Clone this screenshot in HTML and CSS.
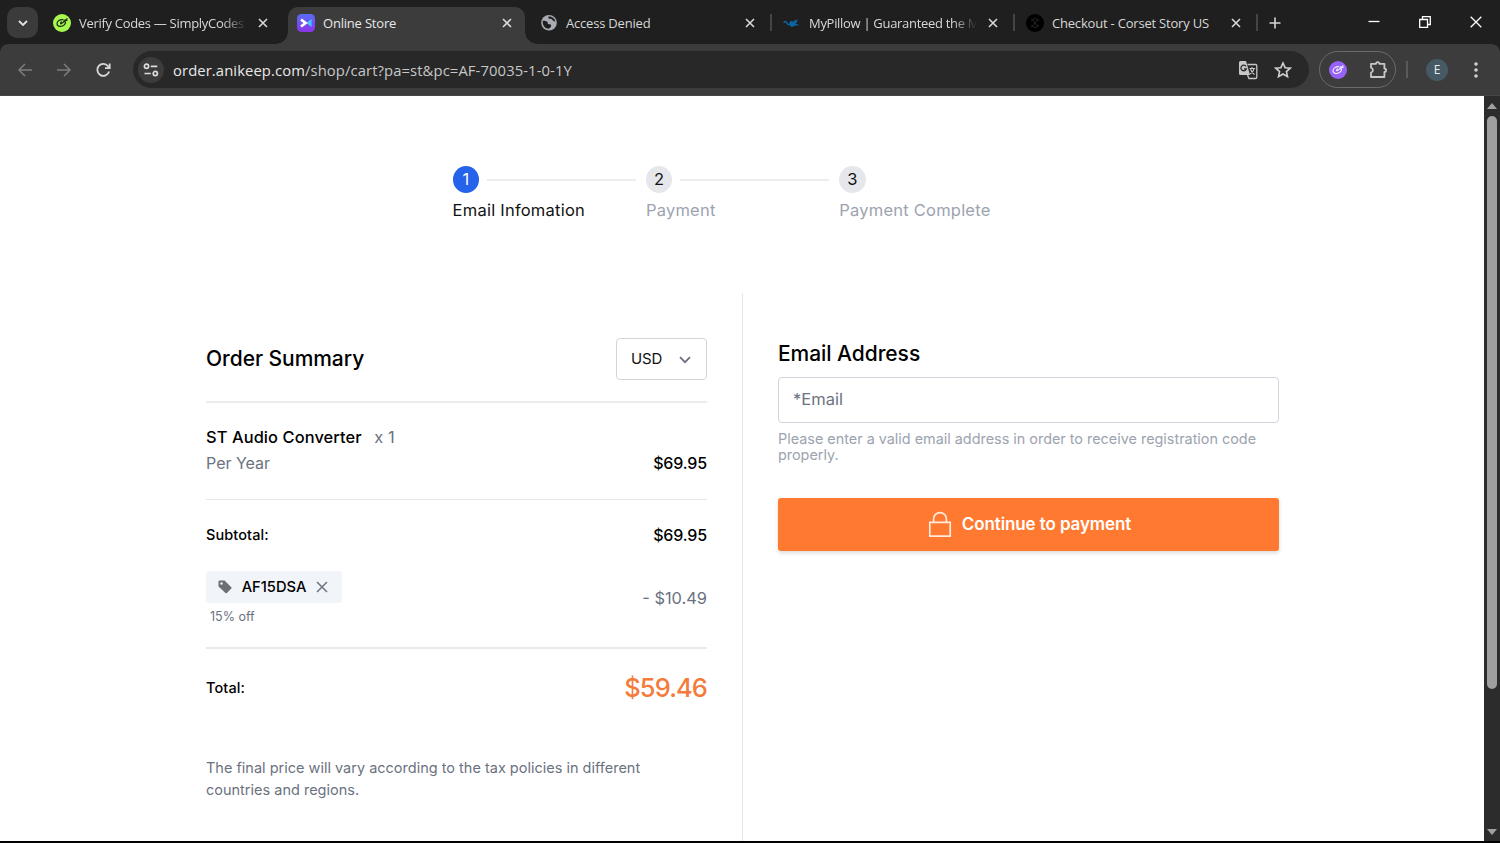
FILE: index.html
```
<!DOCTYPE html>
<html lang="en">
<head>
    <meta charset="UTF-8">
    <title>Online Store</title>
    <link rel="stylesheet" href="styles.css">
</head>
<body>
    <div class="tab-strip">
        <div class="tab-search">
            <svg width="10" height="6" viewBox="0 0 10 6"><path d="M1 1l4 4 4-4" fill="none" stroke="#e3e3e3" stroke-width="1.8"/></svg>
        </div>
        <div class="tab">
            <svg class="favicon" viewBox="0 0 18 18"><circle cx="9" cy="9" r="9" fill="#a6f750"/><path d="M10.500 5.800C7 5 3.800 7.300 4 10c.3 3 5 3.200 7.300.8 1.500-1.500 1.700-3 .5-3.200-1.300-.2-3 2.400-3.800 2.200-.8-.1-.3-1.600.8-2.200M10.500 7.500L14.500 4.500M11.500 5.800l3 1" fill="none" stroke="#1b2a12" stroke-width="1.200"/></svg>
            <span class="tab-title fade">Verify Codes — SimplyCodes</span>
            <svg class="close" viewBox="0 0 10 10"><path d="M1 1l8 8M9 1l-8 8"/></svg>
        </div>
        <div class="tab active">
            <svg class="favicon" viewBox="0 0 18 18">
                <defs><linearGradient id="store" x1="0" y1="0" x2="0" y2="1"><stop offset="0" stop-color="#5a6cf5"/><stop offset="1" stop-color="#8a35e8"/></linearGradient></defs>
                <rect width="18" height="18" rx="4.500" fill="url(#store)"/>
                <path d="M14.500 5v8L9.500 9z" fill="#43c8ff"/>
                <path d="M4 5.500L8.500 9 4 12.500" fill="none" stroke="#fff" stroke-width="2.800"/>
            </svg>
            <span class="tab-title">Online Store</span>
            <svg class="close" viewBox="0 0 10 10"><path d="M1 1l8 8M9 1l-8 8"/></svg>
        </div>
        <div class="tab">
            <svg class="favicon" viewBox="0 0 18 18"><circle cx="9" cy="8.700" r="7.800" fill="#a9adb3"/><path d="M2.700 6.700c2.500 0 5 .4 5 2.200 0 1.800 2 .8 3.200 1.800 1 1-.2 3.200-2.500 4-3.800-.2-6-3.500-5.700-8zM8.500 2.400c-.5 2 .5 2.600 2 2.400 1.600-.2 1.700 2 3.200 2.200 1 .1 1.600.6 1.700 1.200C15.300 4.700 12.500 2.200 8.500 2.400z" fill="#1f1f1f"/></svg>
            <span class="tab-title">Access Denied</span>
            <svg class="close" viewBox="0 0 10 10"><path d="M1 1l8 8M9 1l-8 8"/></svg>
        </div>
        <div class="tab line">
            <svg class="favicon" viewBox="0 0 18 18"><path d="M.7 9c.8-2 2.500-1.800 3.100-.2s1.600 2.300 3 1.200c1-.8 0-2 1.200-2.300" fill="none" stroke="#0b66a6" stroke-width="1.400"/><path d="M6 10.500L8.500 7l2 1 1.500-2.500 1 1.200L14.500 5l-.3 3-2 1.500 4.500 1.700-4.700.3-1.500 1-2.500.3z" fill="#0b66a6"/></svg>
            <span class="tab-title fade">MyPillow | Guaranteed the M</span>
            <svg class="close" viewBox="0 0 10 10"><path d="M1 1l8 8M9 1l-8 8"/></svg>
        </div>
        <div class="tab line">
            <svg class="favicon" viewBox="0 0 18 18"><circle cx="9" cy="9" r="9" fill="#000"/><path d="M5.500 4.500l7 9M12.500 4.500l-7 9M5 7l4-3 4 3M5 11l4 3 4-3" fill="none" stroke="#2c2c2c" stroke-width=".8"/></svg>
            <span class="tab-title">Checkout - Corset Story US</span>
            <svg class="close" viewBox="0 0 10 10"><path d="M1 1l8 8M9 1l-8 8"/></svg>
        </div>
        <div class="new-tab">
            <svg width="12" height="12" viewBox="0 0 12 12"><path d="M6 .5v11M.5 6h11" stroke="#d5d5d5" stroke-width="1.600"/></svg>
        </div>
        <div class="window-buttons">
            <svg width="12" height="12" viewBox="0 0 12 12"><path d="M.5 5.500h11"/></svg>
            <svg width="12" height="12" viewBox="0 0 12 12"><path d="M.7 3.500h7.800v7.800H.7zM3.500 3.500V.7h7.800v7.800H8.500"/></svg>
            <svg width="12" height="12" viewBox="0 0 12 12"><path d="M.7.7l10.600 10.600M11.300.7L.7 11.300"/></svg>
        </div>
    </div>

    <div class="toolbar">
        <svg class="nav dim" viewBox="0 0 16 16"><path d="M15 8H2M8 2L2 8l6 6"/></svg>
        <svg class="nav dim" viewBox="0 0 16 16"><path d="M1 8h13M8 2l6 6-6 6"/></svg>
        <svg class="nav" viewBox="0 0 16 16"><path d="M14.100 9.500A6 6 0 1 1 13.100 4.200L14.500 5.800M14.700 1.500v4.700H10"/></svg>
        <div class="address-bar">
            <div class="site-info">
                <svg width="16" height="14" viewBox="0 0 16 14"><g fill="none" stroke="#dcdcdc" stroke-width="1.700"><circle cx="3.500" cy="3.300" r="2.100"/><path d="M7.800 3.300h6.500M1.500 10.500h6.300"/><circle cx="12.300" cy="10.500" r="2.100"/></g></svg>
            </div>
            <span class="url"><b>order.anikeep.com</b>/shop/cart?pa=st&amp;pc=AF-70035-1-0-1Y</span>
            <svg width="20" height="20" viewBox="0 0 20 20"><path d="M1 2.500A1.500 1.500 0 0 1 2.500 1H8l4 14H2.500A1.500 1.500 0 0 1 1 13.500z" fill="#c7c7c7"/><path d="M9.500 4.500h8A1.300 1.300 0 0 1 18.800 5.800v11.400a1.300 1.300 0 0 1-1.300 1.300H11l-1.500-3.500" fill="none" stroke="#c7c7c7" stroke-width="1.300"/><path d="M8 6.300A2.800 2.800 0 1 0 8.400 8.800H6" fill="none" stroke="#282828" stroke-width="1.300"/><path d="M11.500 8.500h5.700M14 7v1.500M16 8.500c-.5 2.500-2 4.500-4 5.500M12.500 9c.8 2.500 2.200 4.300 4 5.500" fill="none" stroke="#c7c7c7" stroke-width="1.100"/></svg>
            <svg class="star" width="18" height="18" viewBox="0 0 18 18"><path d="M9 2l2.100 4.700 5.100.5-3.800 3.400 1.100 5L9 13l-4.500 2.600 1.100-5L1.800 7.200l5.100-.5z" fill="none" stroke="#d0d0d0" stroke-width="1.600"/></svg>
        </div>
        <div class="extensions">
            <svg width="18" height="18" viewBox="0 0 18 18"><circle cx="9" cy="9" r="9" fill="#9563f7"/><path d="M10.500 5.800C7 5 3.800 7.300 4 10c.3 3 5 3.200 7.300.8 1.500-1.500 1.700-3 .5-3.200-1.300-.2-3 2.400-3.800 2.200-.8-.1-.3-1.600.8-2.200M10.500 7.500L14.500 4.500M11.500 5.800l3 1" fill="none" stroke="#f3ecff" stroke-width="1.100"/></svg>
            <svg width="20" height="20" viewBox="0 0 20 20"><path d="M3 3.800h5a1.700 1.700 0 0 1 3.400 0h5v4.700a1.700 1.700 0 0 1 0 3.400v5.100H3v-4.300a2.600 2.600 0 0 0 0-5z" fill="none" stroke="#c7c7c7" stroke-width="1.800" stroke-linejoin="round"/></svg>
        </div>
        <div class="divider"></div>
        <div class="avatar">E</div>
        <svg class="menu" width="4" height="16" viewBox="0 0 4 16"><circle cx="2" cy="2" r="1.800"/><circle cx="2" cy="8" r="1.800"/><circle cx="2" cy="14" r="1.800"/></svg>
    </div>

    <div class="viewport">
        <div class="page">
            <div class="steps">
                <div class="step current">
                    <div class="step-top"><span class="num">1</span><span class="bar"></span></div>
                    <div class="step-label">Email Infomation</div>
                </div>
                <div class="step">
                    <div class="step-top"><span class="num">2</span><span class="bar"></span></div>
                    <div class="step-label">Payment</div>
                </div>
                <div class="step">
                    <div class="step-top"><span class="num">3</span></div>
                    <div class="step-label">Payment Complete</div>
                </div>
            </div>

            <div class="columns">
                <div class="summary">
                    <div class="summary-header">
                        <h2>Order Summary</h2>
                        <div class="currency">USD
                            <svg width="12" height="8" viewBox="0 0 12 8"><path d="M1 1.200l5 5 5-5" fill="none" stroke="#6b7280" stroke-width="1.800"/></svg>
                        </div>
                    </div>
                    <div class="item">
                        <div>
                            <div class="item-name">ST Audio Converter <span class="qty">x 1</span></div>
                            <div class="period">Per Year</div>
                        </div>
                        <div class="price">$69.95</div>
                    </div>
                    <div class="totals">
                        <div class="row">
                            <span class="label">Subtotal:</span>
                            <span class="price">$69.95</span>
                        </div>
                        <div class="row discount">
                            <div>
                                <div class="coupon">
                                    <svg width="14" height="14" viewBox="0 0 14 14"><path d="M1.500.5h5L13.300 7.200a1 1 0 0 1 0 1.400L8.900 13a1 1 0 0 1-1.400 0L.5 6.500v-5a1 1 0 0 1 1-1z" fill="#6b7075"/><circle cx="3.500" cy="3.500" r="1.200" fill="#f1f4f9"/></svg>
                                    <span class="code">AF15DSA</span>
                                    <svg width="12" height="12" viewBox="0 0 12 12"><path d="M1 1l10 10M11 1L1 11" stroke="#6b7280" stroke-width="1.500"/></svg>
                                </div>
                                <div class="percent">15% off</div>
                            </div>
                            <span class="minus">- $10.49</span>
                        </div>
                    </div>
                    <div class="total">
                        <span class="label">Total:</span>
                        <span class="amount">$59.46</span>
                    </div>
                    <p class="note">The final price will vary according to the tax policies in different<br>countries and regions.</p>
                </div>

                <div class="payment">
                    <h2>Email Address</h2>
                    <div class="email-box">*Email</div>
                    <p class="hint">Please enter a valid email address in order to receive registration code<br>properly.</p>
                    <div class="pay-button">
                        <svg width="24" height="27" viewBox="0 0 24 27"><path d="M1.800 11.300h20.400v13.900H1.800zM5.600 11V8a6.400 6.400 0 0 1 12.800 0v3" fill="none" stroke="#ffeadd" stroke-width="1.700"/></svg>
                        Continue to payment
                    </div>
                </div>
            </div>
        </div>
        <div class="scrollbar">
            <svg width="10" height="6" viewBox="0 0 10 6"><path d="M0 6l5-6 5 6z"/></svg>
            <div class="thumb"></div>
            <svg width="10" height="6" viewBox="0 0 10 6"><path d="M0 0l5 6 5-6z"/></svg>
        </div>
    </div>
</body>
</html>
```
FILE: styles.css
```
* {
    box-sizing: border-box;
}
body {
    margin: 0;
    height: 843px;
    display: flex;
    flex-direction: column;
    overflow: hidden;
    background: #000;
    font-family: Inter, "Liberation Sans", sans-serif;
}
svg {
    display: block;
    flex-shrink: 0;
}
h2, p {
    margin: 0;
}

/* Browser tabs */
.tab-strip {
    height: 44px;
    flex-shrink: 0;
    display: flex;
    align-items: flex-start;
    padding: 7px 0 0 7px;
    background: #1f1f1f;
    font-family: "Open Sans", sans-serif;
}
.tab-search {
    width: 31px;
    height: 31px;
    margin-right: 6px;
    border-radius: 10px;
    background: #3b3b3b;
    display: flex;
    align-items: center;
    justify-content: center;
}
.tab {
    position: relative;
    width: 243px;
    height: 37px;
    padding: 0 0 5px 9px;
    display: flex;
    align-items: center;
    color: #d8d8d8;
}
.tab.active {
    width: 237px;
    margin: 0 6px 0 1px;
    background: #3c3c3c;
    border-radius: 10px 10px 0 0;
    color: #e8e8e8;
}
/* Curved feet of the active tab */
.tab.active::before,
.tab.active::after {
    content: "";
    position: absolute;
    bottom: 0;
    width: 12px;
    height: 12px;
}
.tab.active::before {
    left: -12px;
    background: radial-gradient(circle at 0 0, transparent 11.5px, #3c3c3c 12px);
}
.tab.active::after {
    right: -12px;
    background: radial-gradient(circle at 100% 0, transparent 11.5px, #3c3c3c 12px);
}
.tab.line::before {
    content: "";
    position: absolute;
    left: -4px;
    top: 7px;
    width: 2px;
    height: 17px;
    background: #454545;
}
.favicon {
    width: 18px;
    height: 18px;
    margin-right: 8px;
}
.tab-title {
    width: 170px;
    white-space: nowrap;
    font-size: 13px;
    letter-spacing: -0.2px;
}
.tab-title.fade {
    letter-spacing: -0.3px;
    mask-image: linear-gradient(to right, #000 84%, transparent 99%);
}
.close {
    width: 10px;
    height: 10px;
    margin-left: 9px;
}
.close path {
    stroke: #d8d8d8;
    stroke-width: 1.6;
}
.new-tab {
    position: relative;
    padding: 10px 0 0 9px;
}
.new-tab::before {
    content: "";
    position: absolute;
    left: -4px;
    top: 7px;
    width: 2px;
    height: 17px;
    background: #454545;
}
.window-buttons {
    display: flex;
    gap: 39px;
    margin: 9px 18px 0 auto;
    fill: none;
    stroke: #fff;
    stroke-width: 1.3;
}

/* Toolbar */
.toolbar {
    height: 52px;
    flex-shrink: 0;
    display: flex;
    align-items: center;
    padding: 0 0 1px 17px;
    background: linear-gradient(#3c3c3c, #3c3c3c 51px, #454545 51px);
    border-radius: 8px 8px 0 0;
    box-shadow: 0 -8px 0 #1f1f1f;
    z-index: -1;
}
.nav {
    width: 16px;
    height: 16px;
    margin-right: 23px;
    fill: none;
    stroke: #d8d8d8;
    stroke-width: 1.8;
}
.nav.dim {
    stroke: #7c7c7c;
    stroke-width: 1.5;
}
.address-bar {
    width: 1176px;
    height: 37px;
    margin-left: -1px;
    border-radius: 19px;
    background: #282828;
    display: flex;
    align-items: center;
    padding: 0 17px 0 5px;
}
.site-info {
    width: 26px;
    height: 26px;
    border-radius: 50%;
    background: #3c3c3c;
    display: flex;
    align-items: center;
    justify-content: center;
}
.url {
    flex: 1;
    margin-left: 9px;
    font-family: "Open Sans", sans-serif;
    font-size: 14.8px;
    letter-spacing: 0.1px;
    color: #c7c7c7;
}
.url b {
    font-weight: 400;
    color: #e8e8e8;
}
.star {
    margin-left: 16px;
}
.extensions {
    width: 77px;
    height: 37px;
    margin-left: 10px;
    padding: 0 7px 0 9px;
    border: 1px solid #6b6b6b;
    border-radius: 19px;
    display: flex;
    align-items: center;
    justify-content: space-between;
}
.divider {
    width: 2px;
    height: 17px;
    margin: 0 18px 0 10px;
    background: #5a5a5a;
}
.avatar {
    width: 22px;
    height: 22px;
    border-radius: 50%;
    background: #455a64;
    color: #e8eef0;
    font: 12px/22px "Open Sans", sans-serif;
    text-align: center;
}
.menu {
    margin-left: 26px;
    fill: #d0d0d0;
}

/* Page */
.viewport {
    height: 745px;
    display: flex;
    overflow: hidden;
}
.page {
    flex: 1;
    background: #fff;
    padding: 70px 205px 0 206px;
    overflow: hidden;
}
.scrollbar {
    width: 16px;
    background: #2c2c2c;
    display: flex;
    flex-direction: column;
    align-items: center;
    padding: 7px 0 6px;
    fill: #a0a0a0;
}
.thumb {
    width: 10px;
    height: 573px;
    margin: 7px 0 auto;
    border-radius: 5px;
    background: #9f9f9f;
}

.steps {
    display: flex;
    height: 127px;
    margin-left: 246.6px;
}
.step {
    width: 193.3px;
    color: #9ca3af;
    font-size: 16.5px;
    white-space: nowrap;
}
.step-top {
    display: flex;
    align-items: center;
}
.num {
    width: 26.5px;
    height: 27px;
    border-radius: 50%;
    background: #e5e7eb;
    color: #111;
    line-height: 27px;
    text-align: center;
}
.bar {
    width: 149px;
    height: 2px;
    margin-left: 8px;
    background: #ebedf0;
}
.step-label {
    line-height: 24px;
    margin-top: 5px;
    letter-spacing: 0.23px;
}
.current {
    color: #111;
}
.current .num {
    background: #2563eb;
    color: #fff;
}

.columns {
    display: flex;
    height: 600px;
}
.summary {
    width: 537px;
    padding: 45px 35px 0 0;
    border-right: 1px solid #e5e7eb;
}
h2 {
    font-size: 21px;
    line-height: 28px;
    font-weight: 500;
    letter-spacing: -0.05px;
    color: #000;
}
.summary-header {
    display: flex;
    justify-content: space-between;
    align-items: center;
    padding-bottom: 21px;
    border-bottom: 2px solid #ececee;
}
.currency {
    width: 91px;
    height: 42px;
    padding: 0 15px 2px 14px;
    border: 1px solid #d1d5db;
    border-radius: 4px;
    display: flex;
    align-items: center;
    justify-content: space-between;
    font-size: 15px;
    letter-spacing: -0.2px;
    color: #111;
}
.currency svg {
    margin-top: 3px;
}
.item {
    display: flex;
    justify-content: space-between;
    align-items: flex-end;
    padding: 21px 0 23px;
    border-bottom: 1px solid #e5e7eb;
    font-size: 16.4px;
    line-height: 26px;
}
.item-name {
    font-weight: 550;
    letter-spacing: 0.1px;
    color: #000;
}
.qty {
    margin-left: 8px;
    font-weight: 400;
    color: #6b7280;
}
.period {
    font-size: 16px;
    color: #6b7280;
}
.price {
    font-size: 16px;
    font-weight: 550;
    letter-spacing: -0.15px;
    color: #000;
}
.label {
    font-size: 14.5px;
    font-weight: 550;
    letter-spacing: 0.1px;
    color: #000;
}
.totals {
    padding: 23px 0 20px;
    border-bottom: 2px solid #e9eaed;
}
.row {
    display: flex;
    justify-content: space-between;
    align-items: center;
    line-height: 24px;
}
.discount {
    margin-top: 24px;
}
.coupon {
    width: 136px;
    height: 32px;
    padding: 0 14px 0 12px;
    border-radius: 3px;
    background: #f1f4f9;
    display: flex;
    align-items: center;
    justify-content: space-between;
}
.code {
    font-size: 14.7px;
    font-weight: 550;
    color: #000;
}
.percent {
    margin: 4px 0 0 4px;
    font-size: 12.5px;
    line-height: 20px;
    color: #6b7280;
}
.minus {
    padding-bottom: 2px;
    font-size: 16.4px;
    color: #6b7280;
}
.total {
    height: 76px;
    display: flex;
    justify-content: space-between;
    align-items: center;
}
.amount {
    font-size: 25.5px;
    font-weight: 500;
    letter-spacing: -0.9px;
    color: #f47b3c;
}
.note {
    margin-top: 32px;
    font-size: 14.5px;
    line-height: 22px;
    color: #6b7280;
    white-space: nowrap;
}

.payment {
    width: 536px;
    padding: 47px 0 0 35px;
}
.email-box {
    height: 46px;
    margin-top: 9px;
    padding: 0 14px;
    border: 1px solid #d1d5db;
    border-radius: 4px;
    line-height: 43px;
    font-size: 16.5px;
    color: #6b7280;
}
.hint {
    margin-top: 8px;
    font-size: 14.4px;
    line-height: 16px;
    color: #9ca3af;
    white-space: nowrap;
}
.pay-button {
    height: 53px;
    margin-top: 35px;
    padding: 0 0 1px 2px;
    border-radius: 3px;
    background: #ff7a30;
    box-shadow: 0 2px 4px rgba(0,0,0,0.15);
    display: flex;
    align-items: center;
    justify-content: center;
    gap: 10px;
    color: #fff;
    font-size: 17px;
    font-weight: 600;
    letter-spacing: -0.1px;
}
```
